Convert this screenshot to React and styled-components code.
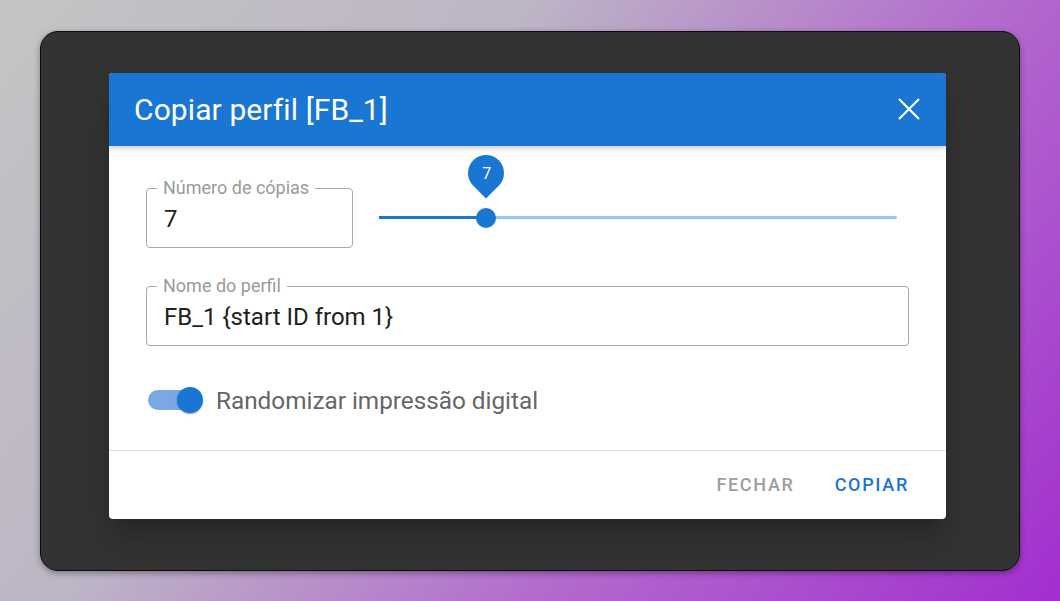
import React, { useState } from 'react'
import styled, { createGlobalStyle } from 'styled-components'

const GlobalStyle = createGlobalStyle`
    html, body {
        margin: 0;
        padding: 0;
    }
    body {
        font-family: Roboto, "Noto Sans", sans-serif;
    }
`

const Page = styled.div`
    width: 1060px;
    height: 601px;
    display: flex;
    align-items: center;
    justify-content: center;
    background: linear-gradient(128deg, #c4c4c4 0%, #bdb5c6 35%, #b36ccd 65%, #a22ecf 100%);
`

const Frame = styled.div`
    box-sizing: border-box;
    width: 980px;
    height: 540px;
    padding: 41px 0 0 68px;
    border: 1px solid #0d0d0d;
    border-radius: 18px;
    background: #333333;
    box-shadow: 0 2px 6px rgba(0, 0, 0, 0.35);
`

const Dialog = styled.div`
    width: 837px;
    height: 446px;
    display: flex;
    flex-direction: column;
    background: #fff;
    border-radius: 4px;
    overflow: hidden;
    box-shadow: 0 11px 15px -7px rgba(0,0,0,.2), 0 24px 38px 3px rgba(0,0,0,.14);
`

const Header = styled.div`
    height: 73px;
    flex-shrink: 0;
    display: flex;
    align-items: center;
    justify-content: space-between;
    padding: 0 26px 0 25px;
    background: #1976d2;
    color: #fff;
    box-shadow: 0 2px 5px rgba(0, 0, 0, 0.22);
    position: relative;
    z-index: 1;
`

const Title = styled.h2`
    margin: 0;
    font-size: 30px;
    font-weight: 400;
    letter-spacing: 0.1px;
`

const CloseButton = styled.button`
    border: 0;
    padding: 0;
    background: none;
    display: flex;
    cursor: pointer;
`

const Content = styled.div`
    flex: 1;
    padding: 42px 37px 0 37px;
    display: flex;
    flex-direction: column;
`

const Row = styled.div`
    display: flex;
    align-items: center;
`

const Field = styled.div`
    position: relative;
    box-sizing: border-box;
    width: ${p => p.$width || '100%'};
    height: 60px;
    border: 1px solid #a8a8a8;
    border-radius: 4px;
    display: flex;
    align-items: center;
    padding: 3px 17px 0 17px;
    margin-top: ${p => p.$top || 0}px;
`

const FieldLabel = styled.span`
    position: absolute;
    top: -12px;
    left: 10px;
    padding: 0 6px;
    background: #fff;
    color: #9a9a9a;
    font-size: 18px;
    line-height: 22px;
`

const FieldValue = styled.span`
    font-size: 24px;
    color: #212121;
`

const SliderBox = styled.div`
    position: relative;
    flex: 1;
    height: 20px;
    margin: 0 12px 0 26px;
    display: flex;
    align-items: center;
`

const Rail = styled.div`
    position: relative;
    width: 100%;
    height: 3px;
    border-radius: 2px;
    background: #90caf9;
`

const Track = styled.div`
    position: absolute;
    left: 0;
    top: 0;
    height: 3px;
    background: #1976d2;
`

const Thumb = styled.div`
    position: absolute;
    top: 50%;
    width: 20px;
    height: 20px;
    margin: -10px 0 0 -10px;
    border-radius: 50%;
    background: #1976d2;
`

const ValueLabel = styled.div`
    position: absolute;
    left: 50%;
    bottom: 37px;
    width: 36px;
    height: 36px;
    margin-left: -18px;
    border-radius: 50% 50% 50% 0;
    background: #1976d2;
    transform: rotate(-45deg);
    display: flex;
    align-items: center;
    justify-content: center;
`

const ValueText = styled.span`
    transform: rotate(45deg);
    color: #fff;
    font-size: 16px;
`

const SwitchRow = styled.label`
    display: flex;
    align-items: center;
    margin-top: 40px;
    gap: 16px;
`

const SwitchTrack = styled.div`
    position: relative;
    width: 52px;
    height: 20px;
    margin-left: 2px;
    border-radius: 10px;
    background: ${p => (p.$on ? '#7aa8e4' : '#bdbdbd')};
`

const SwitchKnob = styled.div`
    position: absolute;
    top: -3px;
    left: ${p => (p.$on ? 29 : -2)}px;
    width: 26px;
    height: 26px;
    border-radius: 50%;
    background: ${p => (p.$on ? '#1976d2' : '#fafafa')};
    box-shadow: 0 2px 1px -1px rgba(0,0,0,.2), 0 1px 1px 0 rgba(0,0,0,.14), 0 1px 3px 0 rgba(0,0,0,.12);
`

const SwitchText = styled.span`
    font-size: 24.3px;
    color: #666;
`

const Footer = styled.div`
    height: 68px;
    border-top: 1px solid #e0e0e0;
    display: flex;
    align-items: center;
    justify-content: flex-end;
    gap: 40px;
    padding: 0 37px 0 0;
`

const Button = styled.button`
    border: 0;
    background: none;
    padding: 0;
    font-family: Roboto, sans-serif;
    font-size: 18px;
    font-weight: 500;
    letter-spacing: 1.7px;
    color: ${p => (p.$primary ? '#1976d2' : '#9e9e9e')};
    cursor: pointer;
`

const MIN = 1
const MAX = 30

export default function App() {
    const [copies] = useState(7)
    const [random, setRandom] = useState(true)
    const pct = ((copies - MIN) / (MAX - MIN)) * 100

    return (
        <>
            <GlobalStyle />
            <Page>
                <Frame>
                    <Dialog>
                        <Header>
                            <Title>Copiar perfil [FB_1]</Title>
                            <CloseButton>
                                <svg width="22" height="22" viewBox="0 0 22 22">
                                    <path d="M1 1 L21 21 M21 1 L1 21" stroke="#fff" strokeWidth="2.2" fill="none" />
                                </svg>
                            </CloseButton>
                        </Header>
                        <Content>
                            <Row>
                                <Field $width="207px">
                                    <FieldLabel>Número de cópias</FieldLabel>
                                    <FieldValue>{copies}</FieldValue>
                                </Field>
                                <SliderBox>
                                    <Rail>
                                        <Track style={{ width: `${pct}%` }} />
                                        <Thumb style={{ left: `${pct}%` }}>
                                            <ValueLabel>
                                                <ValueText>{copies}</ValueText>
                                            </ValueLabel>
                                        </Thumb>
                                    </Rail>
                                </SliderBox>
                            </Row>
                            <Field $top={38}>
                                <FieldLabel>Nome do perfil</FieldLabel>
                                <FieldValue>FB_1 {'{start ID from 1}'}</FieldValue>
                            </Field>
                            <SwitchRow onClick={() => setRandom(!random)}>
                                <SwitchTrack $on={random}>
                                    <SwitchKnob $on={random} />
                                </SwitchTrack>
                                <SwitchText>Randomizar impressão digital</SwitchText>
                            </SwitchRow>
                        </Content>
                        <Footer>
                            <Button>FECHAR</Button>
                            <Button $primary>COPIAR</Button>
                        </Footer>
                    </Dialog>
                </Frame>
            </Page>
        </>
    )
}
